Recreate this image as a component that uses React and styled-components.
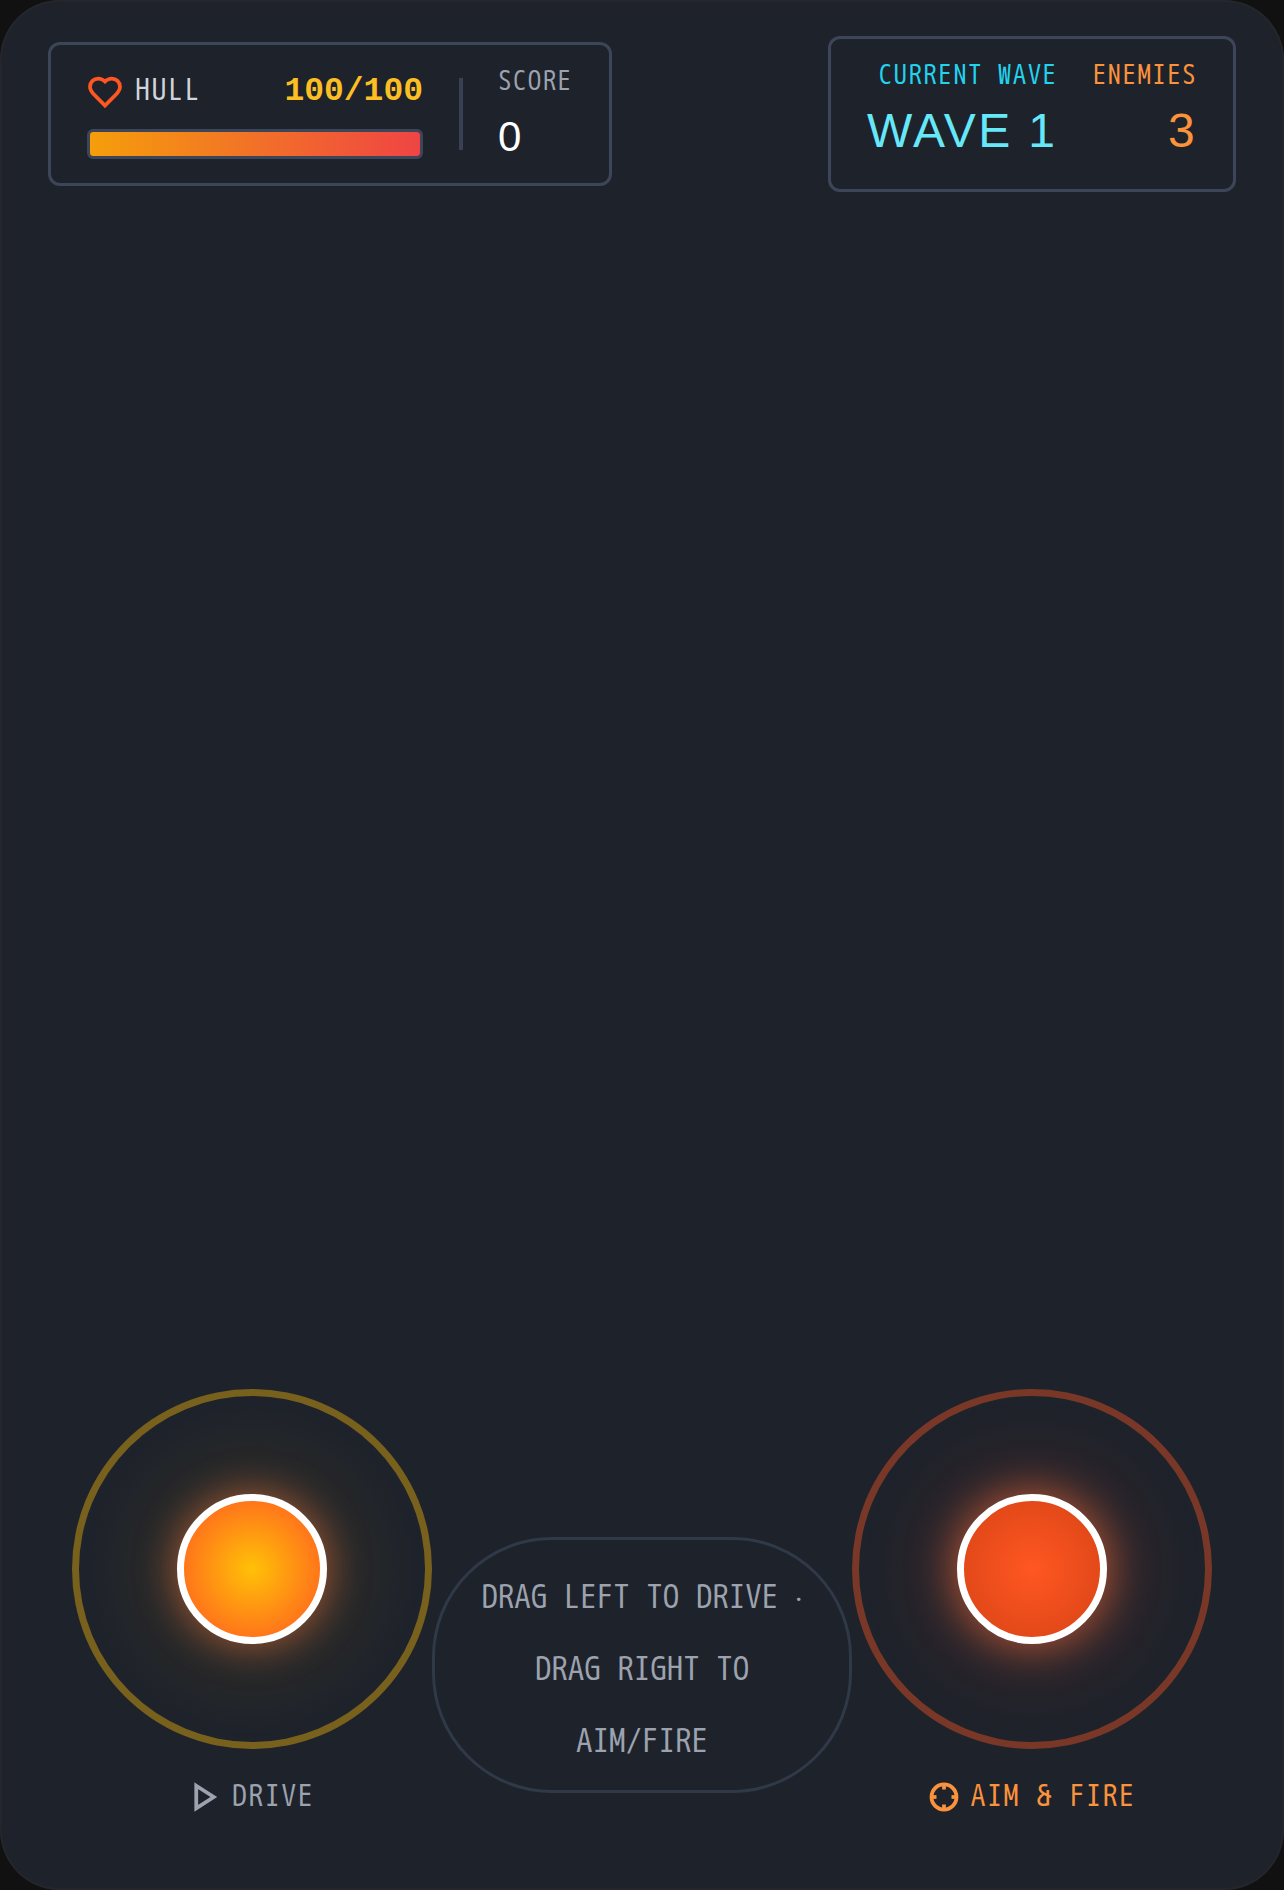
import styled, { createGlobalStyle } from 'styled-components';

const MONO = `"WenQuanYi Zen Hei Mono", "Noto Sans Mono CJK JP", monospace`;
const BOLD_MONO = `"Liberation Mono", monospace`;
const SANS = `"Liberation Sans", Arial, sans-serif`;

const GlobalStyle = createGlobalStyle`
  html, body { margin: 0; padding: 0; background: #111111; }
`;

const Device = styled.div`
  box-sizing: border-box;
  width: 1284px;
  height: 1890px;
  display: flex;
  flex-direction: column;
  justify-content: space-between;
  padding: 36px 48px 74px;
  background: #1e222b;
  border-radius: 60px;
  box-shadow: inset 0 0 0 2px #24262b;
`;

const Hud = styled.div`
  display: flex;
  justify-content: space-between;
  align-items: center;
`;

const Panel = styled.div`
  box-sizing: border-box;
  display: flex;
  border: 3px solid #3d4658;
  border-radius: 12px;
`;

const HullPanel = styled(Panel)`
  align-items: center;
  width: 564px;
  height: 144px;
  padding: 0 36px;
  gap: 36px;
`;

const HullColumn = styled.div`
  flex: none;
  width: 336px;
`;

const HullRow = styled.div`
  display: flex;
  align-items: center;
  justify-content: space-between;
  height: 44px;
  margin-bottom: 16px;
`;

const HullLabel = styled.div`
  display: flex;
  align-items: center;
  gap: 12px;
  font: 400 30px/36px ${MONO};
  letter-spacing: 1.5px;
  color: #d1d5db;
`;

const HullValue = styled.div`
  padding-top: 2px;
  font: 700 33px/42px ${BOLD_MONO};
  color: #fbbf24;
`;

const Bar = styled.div`
  box-sizing: border-box;
  height: 30px;
  border: 3px solid #3d4658;
  border-radius: 6px;
  overflow: hidden;
`;

const BarFill = styled.div`
  height: 100%;
  background: linear-gradient(90deg, #f59e0b, #ef4444);
`;

const Divider = styled.div`
  flex: none;
  width: 4px;
  height: 72px;
  background: #374151;
`;

const ScoreColumn = styled.div`
  display: flex;
  flex-direction: column;
  gap: 6px;
  margin: 2px 0 0 -1px;
`;

const Caption = styled.div`
  font: 400 27px/36px ${MONO};
  letter-spacing: 1.4px;
  color: ${(p) => p.$color};
  text-align: ${(p) => p.$align || 'left'};
`;

const Value = styled.div`
  font: 400 ${(p) => p.$size}px/1.5 ${SANS};
  letter-spacing: ${(p) => p.$spacing || 0}px;
  color: ${(p) => p.$color};
  text-align: ${(p) => p.$align || 'left'};
`;

const WavePanel = styled(Panel)`
  justify-content: space-between;
  width: 408px;
  height: 156px;
  padding: 18px 36px;
`;

const WaveColumn = styled.div`
  display: flex;
  flex-direction: column;
  gap: 2px;
`;

const Controls = styled.div`
  display: flex;
  justify-content: space-between;
  align-items: flex-end;
  padding: 0 24px;
`;

const StickColumn = styled.div`
  display: flex;
  flex-direction: column;
  align-items: center;
  gap: 29px;
`;

const StickRing = styled.div`
  box-sizing: border-box;
  width: 360px;
  height: 360px;
  display: flex;
  align-items: center;
  justify-content: center;
  border: 7px solid ${(p) => p.$ring};
  border-radius: 50%;
  background: radial-gradient(circle, ${(p) => p.$wash} 0%, transparent 70%);
`;

const Knob = styled.div`
  box-sizing: border-box;
  width: 150px;
  height: 150px;
  border: 7px solid #ffffff;
  border-radius: 50%;
  background: radial-gradient(circle, ${(p) => p.$from}, ${(p) => p.$to});
  box-shadow: 0 0 ${(p) => p.$blur}px ${(p) => p.$glow};
`;

const StickLabel = styled.div`
  display: flex;
  align-items: center;
  gap: 12px;
  font: 400 30px/38px ${MONO};
  letter-spacing: 1.5px;
  color: ${(p) => p.$color};
`;

const Hint = styled.div`
  box-sizing: border-box;
  width: 420px;
  height: 256px;
  margin-bottom: 23px;
  display: flex;
  align-items: center;
  justify-content: center;
  padding: 10px 36px 0;
  border: 3px solid #2f3947;
  border-radius: 120px;
  font: 400 33px/72px ${MONO};
  text-align: center;
  color: #9ca3af;
`;

const Stroke = styled.svg`
  flex: none;
  fill: none;
  stroke: currentColor;
  stroke-width: ${(p) => p.$weight};
  stroke-linejoin: miter;
`;

const Heart = styled(Stroke)`
  margin-top: 2px;
  color: #ff5722;
`;

export default function App() {
  return (
    <>
      <GlobalStyle />
      <Device>
        <Hud>
          <HullPanel>
            <HullColumn>
              <HullRow>
                <HullLabel>
                  <Heart $weight={2.5} width="36" height="36" viewBox="0 0 24 24">
                    <path d="M19 14c1.49-1.46 3-3.21 3-5.5A5.5 5.5 0 0 0 16.5 3c-1.76 0-3 .5-4.5 2-1.5-1.5-2.74-2-4.5-2A5.5 5.5 0 0 0 2 8.5c0 2.3 1.5 4.05 3 5.5l7 7Z" />
                  </Heart>
                  HULL
                </HullLabel>
                <HullValue>100/100</HullValue>
              </HullRow>
              <Bar>
                <BarFill style={{ width: '100%' }} />
              </Bar>
            </HullColumn>
            <Divider />
            <ScoreColumn>
              <Caption $color="#9ca3af">SCORE</Caption>
              <Value $size={42} $color="#ffffff">0</Value>
            </ScoreColumn>
          </HullPanel>
          <WavePanel>
            <WaveColumn>
              <Caption $color="#22d3ee" $align="right">CURRENT WAVE</Caption>
              <Value $size={48} $spacing={2.4} $color="#67e8f9">WAVE 1</Value>
            </WaveColumn>
            <WaveColumn>
              <Caption $color="#fb923c" $align="right">ENEMIES</Caption>
              <Value $size={48} $spacing={2.4} $color="#fb923c" $align="right">3</Value>
            </WaveColumn>
          </WavePanel>
        </Hud>
        <Controls>
          <StickColumn>
            <StickRing $ring="rgba(255, 193, 7, 0.4)" $wash="rgba(255, 193, 7, 0.1)">
              <Knob $from="#ffc107" $to="#ff5722" $blur={42} $glow="rgba(255, 122, 60, 0.6)" />
            </StickRing>
            <StickLabel $color="#9ca3af">
              <Stroke $weight={3} width="30" height="30" viewBox="0 0 24 24">
                <polygon points="5 3 19 12 5 21 5 3" />
              </Stroke>
              DRIVE
            </StickLabel>
          </StickColumn>
          <Hint>DRAG LEFT TO DRIVE · DRAG RIGHT TO AIM/FIRE</Hint>
          <StickColumn>
            <StickRing $ring="rgba(255, 87, 34, 0.4)" $wash="rgba(255, 87, 34, 0.1)">
              <Knob $from="#ff5722" $to="#d84315" $blur={48} $glow="rgba(255, 110, 60, 0.75)" />
            </StickRing>
            <StickLabel $color="#fb923c">
              <Stroke $weight={3} width="30" height="30" viewBox="0 0 24 24">
                <circle cx="12" cy="12" r="10" />
                <line x1="22" y1="12" x2="18" y2="12" />
                <line x1="6" y1="12" x2="2" y2="12" />
                <line x1="12" y1="6" x2="12" y2="2" />
                <line x1="12" y1="22" x2="12" y2="18" />
              </Stroke>
              AIM &amp; FIRE
            </StickLabel>
          </StickColumn>
        </Controls>
      </Device>
    </>
  );
}
